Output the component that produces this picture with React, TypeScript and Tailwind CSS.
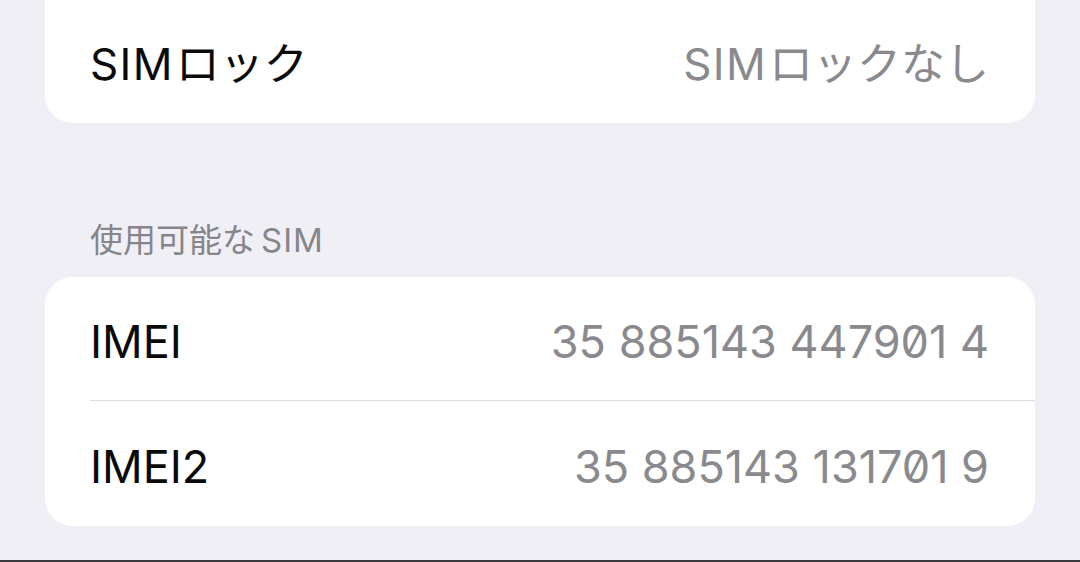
import React from "react";

type Row = {
  label: React.ReactNode;
  value: React.ReactNode;
};

const font = "font-['Inter','Noto_Sans_CJK_JP',sans-serif]";

// Latin run inside Japanese text, with the extra spacing iOS puts around it
function Latin({ children, gap }: { children: React.ReactNode; gap: string }) {
  return <span className={`tracking-[0.03em] ${gap}`}>{children}</span>;
}

const simRows: Row[] = [
  { label: "IMEI", value: "35 885143 447901 4" },
  { label: "IMEI2", value: "35 885143 131701 9" },
];

function SettingRow({ row, className }: { row: Row; className: string }) {
  return (
    <div className={`flex items-center justify-between pl-[45px] pr-[46px] ${className}`}>
      <span className="text-[45px] leading-[56px] text-[#0a0a0a]">{row.label}</span>
      <span className="text-[45px] leading-[56px] text-[#8a8a8e] slashed-zero">{row.value}</span>
    </div>
  );
}

export default function App() {
  return (
    <div className={`flex h-[562px] w-full flex-col overflow-hidden bg-[#f0eff5] ${font}`}>
      {/* SIM lock card (top is scrolled off) */}
      <div className="mx-[45px] rounded-b-[28px] bg-white">
        <SettingRow
          row={{
            label: (
              <span className="text-[44px]">
                <Latin gap="mr-[2px]">SIM</Latin>ロック
              </span>
            ),
            value: (
              <span className="text-[44px]">
                <Latin gap="mr-[2px]">SIM</Latin>ロックなし
              </span>
            ),
          }}
          className="h-[123px] pt-[5px]"
        />
      </div>

      {/* Section header */}
      <div className="h-[154px] pl-[90px] pt-[97px] text-[33px] leading-[40px] text-[#86858b]">
        使用可能な<Latin gap="ml-[6px]">SIM</Latin>
      </div>

      {/* IMEI card */}
      <div className="mx-[45px] rounded-[28px] bg-white">
        <SettingRow row={simRows[0]} className="h-[123px] pt-[6px]" />
        <div className="ml-[45px] h-[1px] bg-[#dcdce0]" />
        <SettingRow row={simRows[1]} className="h-[125px] pt-[6px]" />
      </div>

      <div className="flex-1" />
      <div className="h-[2px] bg-[#3a3a3c]" />
    </div>
  );
}
